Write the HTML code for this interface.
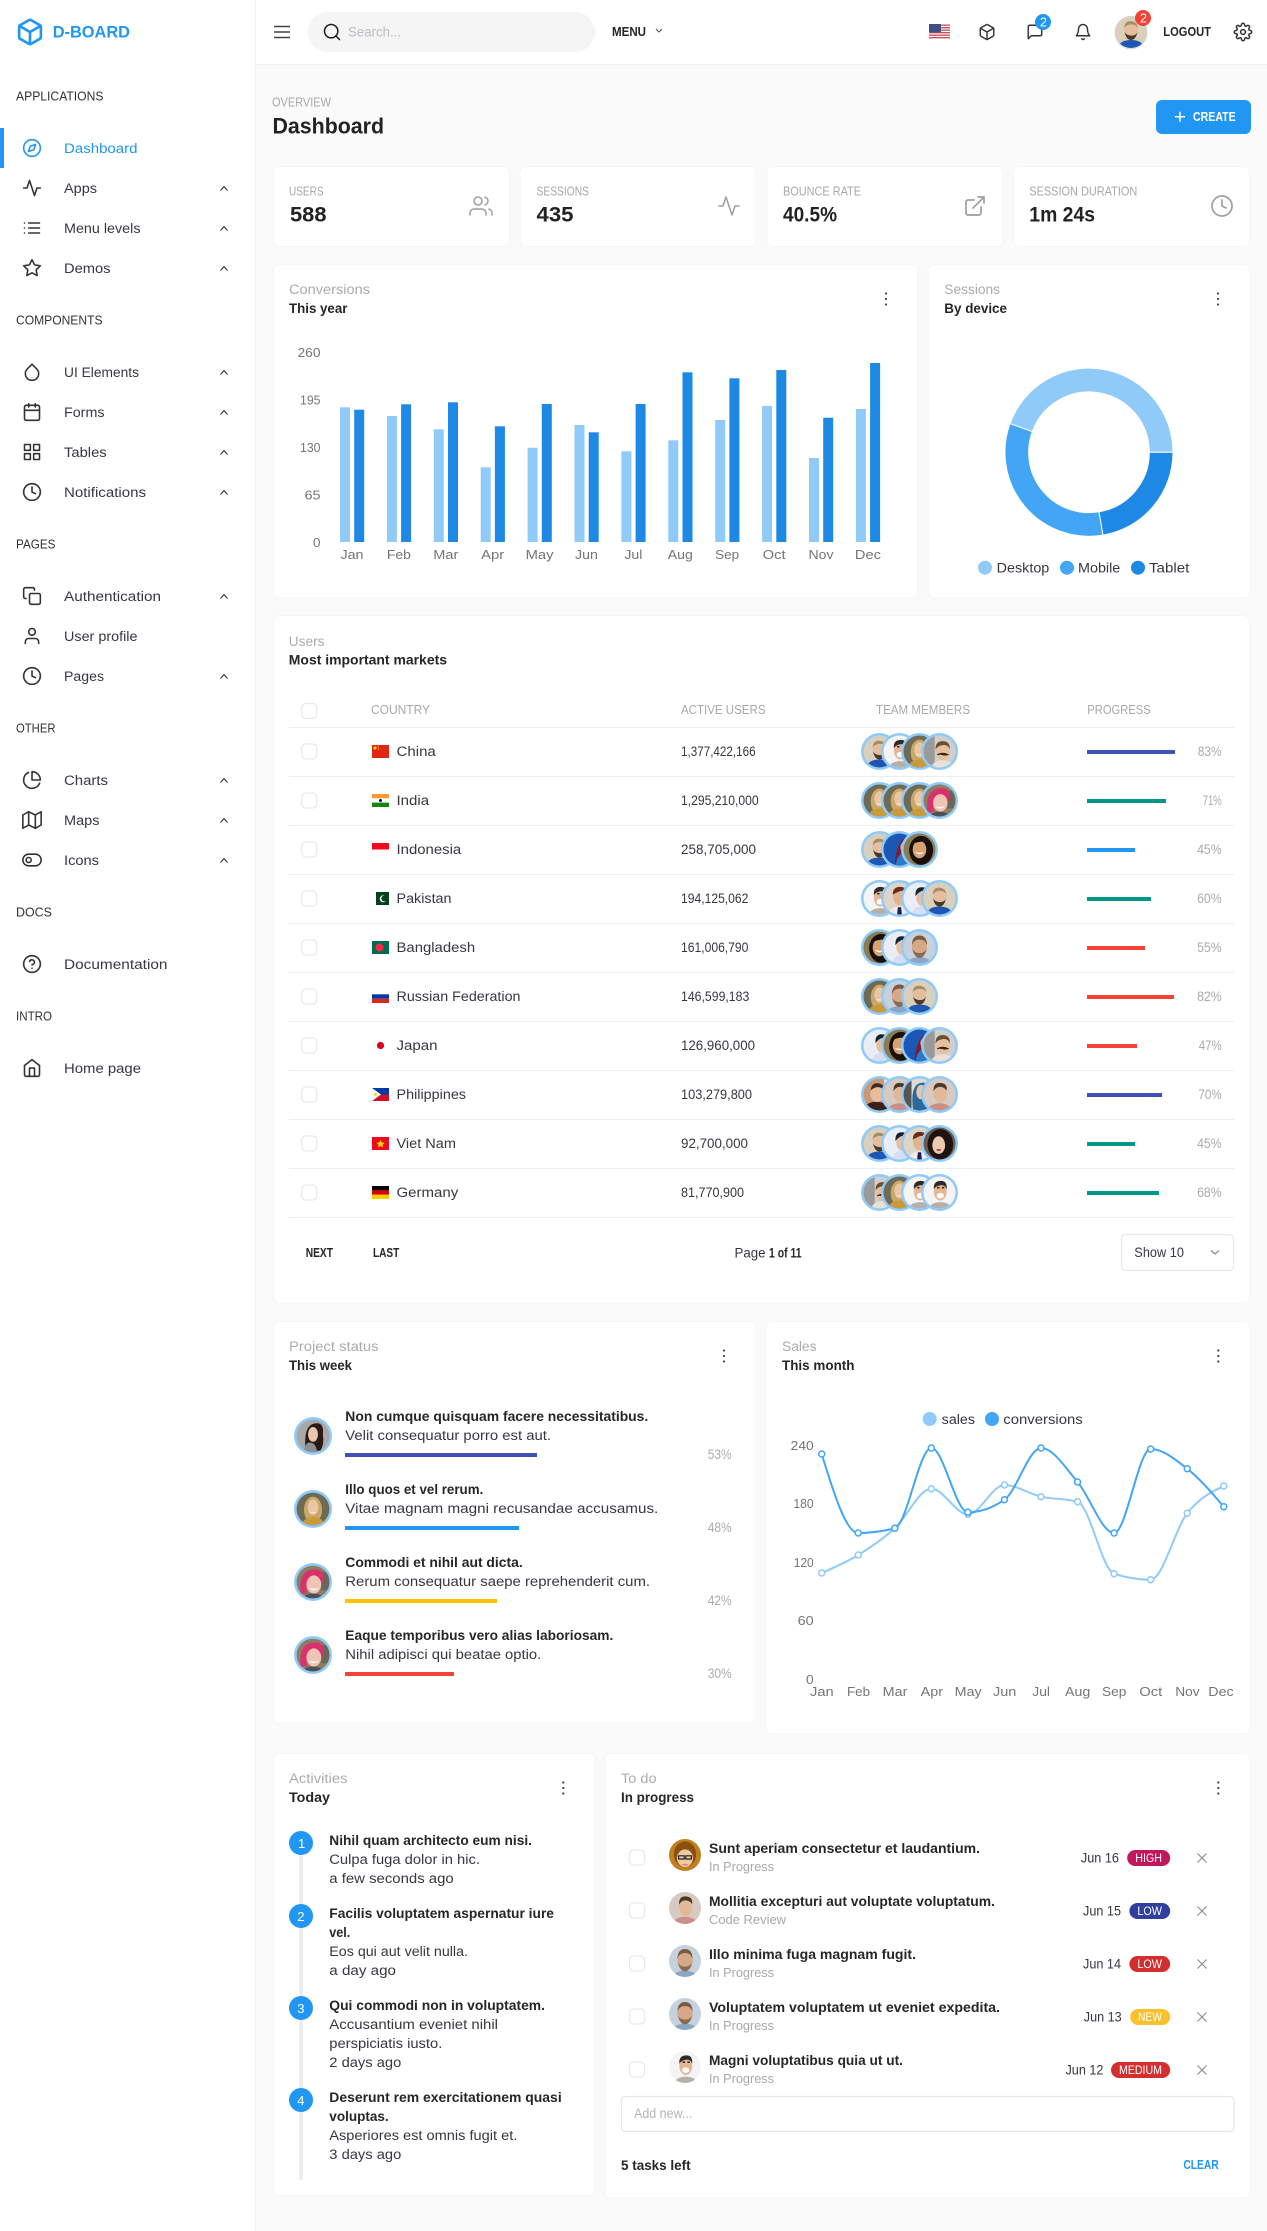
<!DOCTYPE html>
<html lang="en"><head><meta charset="utf-8"><title>D-Board Dashboard</title>
<style>
html,body{margin:0;padding:0;background:#fafafa}
svg{display:block}
text{font-family:"Liberation Sans",sans-serif;font-size:13.5px;fill:#333}
.n{fill:#37373f}
.l{font-size:12.5px;fill:#333}
.g{fill:#ababab}
.b{font-weight:bold;fill:#262626}
.u{font-size:12.5px;fill:#a8a8a8}
.v{font-size:21px;font-weight:bold;fill:#222}
.x{font-size:13px;fill:#757575}
.w{font-size:11.5px;fill:#fff}
.i{fill:none;stroke-width:1.9;stroke-linecap:round;stroke-linejoin:round}
.c{fill:#fff;stroke:#f5f5f5}
.k{fill:#fff;stroke:#e6e9f0;stroke-width:1.2}
</style></head>
<body>
<svg xmlns="http://www.w3.org/2000/svg" width="1267" height="2231" viewBox="0 0 1267 2231">
<defs>
<clipPath id="cc"><circle cx="20" cy="20" r="20"/></clipPath>
<symbol id="a" viewBox="0 0 40 40"><g clip-path="url(#cc)"><rect width="40" height="40" fill="#d9cfbd"/><ellipse cx="20" cy="39" rx="16" ry="9" fill="#1f55b3"/><ellipse cx="20" cy="18" rx="8.500" ry="10.500" fill="#e5bd9f"/><path d="M11.500 15Q12 6 20 6.500T28.500 15Q26 10 20 10.500T11.500 15Z" fill="#a98d62"/><path d="M12 20Q14 30 20 30T28 20Q26 25 20 24.500T12 20Z" fill="#4d3826"/></g></symbol>
<symbol id="b" viewBox="0 0 40 40"><g clip-path="url(#cc)"><rect width="40" height="40" fill="#f4f4f4"/><ellipse cx="21" cy="40" rx="14" ry="8" fill="#b5b0a8"/><ellipse cx="21" cy="19" rx="8" ry="11" fill="#e4b596"/><path d="M13 16Q12 6 21 5.500T29 16Q27 10 21 11T13 16Z" fill="#2e2a28"/><ellipse cx="21" cy="24" rx="4.500" ry="3.500" fill="#fff"/><path d="M17 13h3v2h-3zM23 13h3v2h-3z" fill="#3a2a22"/></g></symbol>
<symbol id="c" viewBox="0 0 40 40"><g clip-path="url(#cc)"><rect width="40" height="40" fill="#6d6a55"/><ellipse cx="20" cy="21" rx="11" ry="16" fill="#c9a866"/><ellipse cx="20" cy="38" rx="13" ry="8" fill="#c99a3c"/><ellipse cx="20" cy="18" rx="6.500" ry="9.500" fill="#eac5a6"/><path d="M15 23Q20 27 25 23Q20 25 15 23Z" fill="#fff"/></g></symbol>
<symbol id="d" viewBox="0 0 40 40"><g clip-path="url(#cc)"><rect width="40" height="40" fill="#cfcfcf"/><rect width="14" height="40" fill="#9a9a9a"/><ellipse cx="24" cy="40" rx="14" ry="9" fill="#e8e2d6"/><ellipse cx="24" cy="20" rx="9" ry="11" fill="#e6c09e"/><path d="M15 17Q15 7 24 7T33 17Q30 11 24 12T15 17Z" fill="#6b5030"/><path d="M17 24Q24 20 31 24Q27 25 24 24T17 24Z" fill="#33251a" stroke="#33251a"/></g></symbol>
<symbol id="e" viewBox="0 0 40 40"><g clip-path="url(#cc)"><rect width="40" height="40" fill="#8d7d62"/><rect x="30" y="8" width="10" height="22" fill="#6a6658"/><path d="M5 34Q2 8 19 5T32 22Q28 14 20 14T12 24T13 34Z" fill="#d9306e"/><ellipse cx="21" cy="23" rx="9" ry="11" fill="#efc4b4"/><path d="M15 27Q21 33 27 27Q21 29 15 27Z" fill="#fff"/><ellipse cx="20" cy="39" rx="11" ry="5" fill="#4a5058"/></g></symbol>
<symbol id="f" viewBox="0 0 40 40"><g clip-path="url(#cc)"><rect width="40" height="40" fill="#1b57b5"/><path d="M14 40Q15 20 22 10T31 14Q24 16 25 40Z" fill="#7a1c32"/><path d="M15 40Q17 27 24 24Q30 30 30 40Z" fill="#2a7ac8"/><ellipse cx="25" cy="17" rx="4" ry="6" fill="#d8a488"/></g></symbol>
<symbol id="g" viewBox="0 0 40 40"><g clip-path="url(#cc)"><rect width="40" height="40" fill="#8a7d55"/><ellipse cx="22" cy="21" rx="15" ry="18" fill="#1a100b"/><ellipse cx="20" cy="20" rx="8.500" ry="11" fill="#d9a274"/><path d="M14 23Q20 29 26 23Q20 25 14 23Z" fill="#fff"/><path d="M11 13Q16 6 27 10Q18 10 11 13Z" fill="#1a100b"/></g></symbol>
<symbol id="h" viewBox="0 0 40 40"><g clip-path="url(#cc)"><rect width="40" height="40" fill="#dcd5c8"/><ellipse cx="20" cy="40" rx="14" ry="10" fill="#ececec"/><path d="M18 31h4l1 9h-6z" fill="#231f55"/><ellipse cx="20" cy="18" rx="8" ry="10.500" fill="#e2b391"/><path d="M11.500 15Q12 5 21 5.500T28.500 14Q24 9 20 11T11.500 15Z" fill="#6a2c1c"/></g></symbol>
<symbol id="i" viewBox="0 0 40 40"><g clip-path="url(#cc)"><rect width="40" height="40" fill="#e9eef6"/><ellipse cx="23" cy="40" rx="12" ry="11" fill="#d5def2"/><ellipse cx="23" cy="19" rx="7" ry="10" fill="#e6bfa0"/><path d="M15 17Q14 6 23 6T31 14Q26 9 22 11T15 17Z" fill="#17222e"/></g></symbol>
<symbol id="j" viewBox="0 0 40 40"><g clip-path="url(#cc)"><rect width="40" height="40" fill="#c5d1dc"/><ellipse cx="20" cy="40" rx="15" ry="8" fill="#8aa6c4"/><ellipse cx="20" cy="19" rx="9.500" ry="13" fill="#d6a888"/><path d="M10.500 17Q11 5 20 5T29.500 17Q27 10 20 10T10.500 17Z" fill="#7a5a40"/><path d="M11 22Q14 33 20 33T29 22Q26 27 20 27T11 22Z" fill="#8a6a50"/></g></symbol>
<symbol id="k" viewBox="0 0 40 40"><g clip-path="url(#cc)"><rect width="40" height="40" fill="#c89878"/><rect x="26" width="14" height="40" fill="#eee"/><ellipse cx="16" cy="40" rx="16" ry="11" fill="#3a2018"/><ellipse cx="17" cy="19" rx="8.500" ry="10.500" fill="#e8bd9c"/><path d="M9 15Q10 5 18 6T26 14Q20 10 16 11T9 15Z" fill="#3a2a20"/></g></symbol>
<symbol id="l" viewBox="0 0 40 40"><g clip-path="url(#cc)"><rect width="40" height="40" fill="#d6cac2"/><ellipse cx="20" cy="40" rx="15" ry="9" fill="#c89088"/><ellipse cx="21" cy="19" rx="8" ry="11" fill="#e2b898"/><path d="M12.500 16Q12 5 21 5.500T29 15Q25 10 20 10.500T12.500 16Z" fill="#4a3a2a"/></g></symbol>
<symbol id="m" viewBox="0 0 40 40"><g clip-path="url(#cc)"><rect width="40" height="40" fill="#e0dcd4"/><rect width="10" height="40" fill="#555"/><path d="M12 40Q8 10 20 6T32 16L30 40Z" fill="#2a6a9a"/><ellipse cx="22" cy="17" rx="6" ry="9" fill="#e8c4a8"/></g></symbol>
<symbol id="n" viewBox="0 0 40 40"><g clip-path="url(#cc)"><rect width="40" height="40" fill="#6a5a50"/><ellipse cx="21" cy="21" rx="16" ry="19" fill="#1f1310"/><ellipse cx="19" cy="22" rx="8" ry="11" fill="#eccab0"/><ellipse cx="19" cy="28" rx="3" ry="1.200" fill="#b03050"/></g></symbol>
<symbol id="o" viewBox="0 0 40 40"><g clip-path="url(#cc)"><rect width="40" height="40" fill="#c08020"/><ellipse cx="20" cy="19" rx="14" ry="16" fill="#8a5010"/><ellipse cx="20" cy="24" rx="10" ry="11" fill="#eec8a0"/><path d="M12 21h7v4h-7zM21 21h7v4h-7z" fill="none" stroke="#222" stroke-width="1.500"/><path d="M15 31Q20 33 25 31Q20 35 15 31Z" fill="#b8504a"/></g></symbol>
<symbol id="p" viewBox="0 0 40 40"><g clip-path="url(#cc)"><rect width="40" height="40" fill="#a8a8a8"/><path d="M11 38Q8 8 21 5T32 18Q34 30 29 38Z" fill="#2b1a14"/><ellipse cx="20" cy="18" rx="6" ry="9" fill="#e9c6ac"/><path d="M9 40Q10 27 17 28T25 40Z" fill="#8a8f96"/></g></symbol>
<symbol id="Ra" viewBox="0 0 37 37"><circle cx="18.500" cy="18.500" r="18.500" fill="#90caf9"/><use href="#a" x="2.500" y="2.500" width="32" height="32"/></symbol>
<symbol id="Rb" viewBox="0 0 37 37"><circle cx="18.500" cy="18.500" r="18.500" fill="#90caf9"/><use href="#b" x="2.500" y="2.500" width="32" height="32"/></symbol>
<symbol id="Rc" viewBox="0 0 37 37"><circle cx="18.500" cy="18.500" r="18.500" fill="#90caf9"/><use href="#c" x="2.500" y="2.500" width="32" height="32"/></symbol>
<symbol id="Rd" viewBox="0 0 37 37"><circle cx="18.500" cy="18.500" r="18.500" fill="#90caf9"/><use href="#d" x="2.500" y="2.500" width="32" height="32"/></symbol>
<symbol id="Re" viewBox="0 0 37 37"><circle cx="18.500" cy="18.500" r="18.500" fill="#90caf9"/><use href="#e" x="2.500" y="2.500" width="32" height="32"/></symbol>
<symbol id="Rf" viewBox="0 0 37 37"><circle cx="18.500" cy="18.500" r="18.500" fill="#90caf9"/><use href="#f" x="2.500" y="2.500" width="32" height="32"/></symbol>
<symbol id="Rg" viewBox="0 0 37 37"><circle cx="18.500" cy="18.500" r="18.500" fill="#90caf9"/><use href="#g" x="2.500" y="2.500" width="32" height="32"/></symbol>
<symbol id="Rh" viewBox="0 0 37 37"><circle cx="18.500" cy="18.500" r="18.500" fill="#90caf9"/><use href="#h" x="2.500" y="2.500" width="32" height="32"/></symbol>
<symbol id="Ri" viewBox="0 0 37 37"><circle cx="18.500" cy="18.500" r="18.500" fill="#90caf9"/><use href="#i" x="2.500" y="2.500" width="32" height="32"/></symbol>
<symbol id="Rj" viewBox="0 0 37 37"><circle cx="18.500" cy="18.500" r="18.500" fill="#90caf9"/><use href="#j" x="2.500" y="2.500" width="32" height="32"/></symbol>
<symbol id="Rk" viewBox="0 0 37 37"><circle cx="18.500" cy="18.500" r="18.500" fill="#90caf9"/><use href="#k" x="2.500" y="2.500" width="32" height="32"/></symbol>
<symbol id="Rl" viewBox="0 0 37 37"><circle cx="18.500" cy="18.500" r="18.500" fill="#90caf9"/><use href="#l" x="2.500" y="2.500" width="32" height="32"/></symbol>
<symbol id="Rm" viewBox="0 0 37 37"><circle cx="18.500" cy="18.500" r="18.500" fill="#90caf9"/><use href="#m" x="2.500" y="2.500" width="32" height="32"/></symbol>
<symbol id="Rn" viewBox="0 0 37 37"><circle cx="18.500" cy="18.500" r="18.500" fill="#90caf9"/><use href="#n" x="2.500" y="2.500" width="32" height="32"/></symbol>
<symbol id="Rp" viewBox="0 0 37 37"><circle cx="18.500" cy="18.500" r="18.500" fill="#90caf9"/><use href="#p" x="2.500" y="2.500" width="32" height="32"/></symbol>

<symbol id="compass" viewBox="0 0 24 24"><circle cx="12" cy="12" r="10"/><polygon points="16.240 7.760 14.120 14.120 7.760 16.240 9.880 9.880"/></symbol>
<symbol id="activity" viewBox="0 0 24 24"><polyline points="22 12 18 12 15 21 9 3 6 12 2 12"/></symbol>
<symbol id="list" viewBox="0 0 24 24"><path d="M8 6h13M8 12h13M8 18h13M3 6h.01M3 12h.01M3 18h.01"/></symbol>
<symbol id="star" viewBox="0 0 24 24"><polygon points="12 2 15.090 8.260 22 9.270 17 14.140 18.180 21.020 12 17.770 5.820 21.020 7 14.140 2 9.270 8.910 8.260"/></symbol>
<symbol id="droplet" viewBox="0 0 24 24"><path d="M12 2.690l5.660 5.660a8 8 0 1 1-11.310 0z"/></symbol>
<symbol id="calendar" viewBox="0 0 24 24"><rect x="3" y="4" width="18" height="18" rx="2"/><path d="M16 2v4M8 2v4M3 10h18"/></symbol>
<symbol id="grid" viewBox="0 0 24 24"><rect x="3" y="3" width="7" height="7"/><rect x="14" y="3" width="7" height="7"/><rect x="14" y="14" width="7" height="7"/><rect x="3" y="14" width="7" height="7"/></symbol>
<symbol id="clock" viewBox="0 0 24 24"><circle cx="12" cy="12" r="10"/><polyline points="12 6 12 12 16 14"/></symbol>
<symbol id="copy" viewBox="0 0 24 24"><rect x="9" y="9" width="13" height="13" rx="2"/><path d="M5 15H4a2 2 0 0 1-2-2V4a2 2 0 0 1 2-2h9a2 2 0 0 1 2 2v1"/></symbol>
<symbol id="user" viewBox="0 0 24 24"><path d="M20 21v-2a4 4 0 0 0-4-4H8a4 4 0 0 0-4 4v2"/><circle cx="12" cy="7" r="4"/></symbol>
<symbol id="pie" viewBox="0 0 24 24"><path d="M21.210 15.890A10 10 0 1 1 8 2.830"/><path d="M22 12A10 10 0 0 0 12 2v10z"/></symbol>
<symbol id="map" viewBox="0 0 24 24"><polygon points="1 6 1 22 8 18 16 22 23 18 23 2 16 6 8 2 1 6"/><path d="M8 2v16M16 6v16"/></symbol>
<symbol id="toggle" viewBox="0 0 24 24"><rect x="1" y="5" width="22" height="14" rx="7"/><circle cx="8" cy="12" r="3"/></symbol>
<symbol id="help" viewBox="0 0 24 24"><circle cx="12" cy="12" r="10"/><path d="M9.090 9a3 3 0 0 1 5.830 1c0 2-3 3-3 3M12 17h.01"/></symbol>
<symbol id="home" viewBox="0 0 24 24"><path d="M3 9l9-7 9 7v11a2 2 0 0 1-2 2H5a2 2 0 0 1-2-2z"/><polyline points="9 22 9 12 15 12 15 22"/></symbol>
<symbol id="box" viewBox="0 0 24 24"><path d="M21 16V8a2 2 0 0 0-1-1.730l-7-4a2 2 0 0 0-2 0l-7 4A2 2 0 0 0 3 8v8a2 2 0 0 0 1 1.730l7 4a2 2 0 0 0 2 0l7-4A2 2 0 0 0 21 16z"/><polyline points="3.270 6.960 12 12.010 20.730 6.960"/><path d="M12 22.080V12"/></symbol>
<symbol id="msg" viewBox="0 0 24 24"><path d="M21 15a2 2 0 0 1-2 2H7l-4 4V5a2 2 0 0 1 2-2h14a2 2 0 0 1 2 2z"/></symbol>
<symbol id="bell" viewBox="0 0 24 24"><path d="M18 8A6 6 0 0 0 6 8c0 7-3 9-3 9h18s-3-2-3-9"/><path d="M13.730 21a2 2 0 0 1-3.460 0"/></symbol>
<symbol id="gear" viewBox="0 0 24 24"><circle cx="12" cy="12" r="3"/><path d="M19.400 15a1.650 1.650 0 0 0 .33 1.820l.06.06a2 2 0 0 1 0 2.830 2 2 0 0 1-2.830 0l-.06-.06a1.650 1.650 0 0 0-1.820-.33 1.650 1.650 0 0 0-1 1.510V21a2 2 0 0 1-2 2 2 2 0 0 1-2-2v-.09A1.650 1.650 0 0 0 9 19.400a1.650 1.650 0 0 0-1.820.33l-.06.06a2 2 0 0 1-2.830 0 2 2 0 0 1 0-2.830l.06-.06a1.650 1.650 0 0 0 .33-1.820 1.650 1.650 0 0 0-1.510-1H3a2 2 0 0 1-2-2 2 2 0 0 1 2-2h.09A1.650 1.650 0 0 0 4.600 9a1.650 1.650 0 0 0-.33-1.820l-.06-.06a2 2 0 0 1 0-2.830 2 2 0 0 1 2.830 0l.06.06a1.650 1.650 0 0 0 1.820.33H9a1.650 1.650 0 0 0 1-1.510V3a2 2 0 0 1 2-2 2 2 0 0 1 2 2v.09a1.650 1.650 0 0 0 1 1.510 1.650 1.650 0 0 0 1.820-.33l.06-.06a2 2 0 0 1 2.830 0 2 2 0 0 1 0 2.830l-.06.06a1.650 1.650 0 0 0-.33 1.820V9a1.650 1.650 0 0 0 1.510 1H21a2 2 0 0 1 2 2 2 2 0 0 1-2 2h-.09a1.650 1.650 0 0 0-1.510 1z"/></symbol>
<symbol id="users" viewBox="0 0 24 24"><path d="M17 21v-2a4 4 0 0 0-4-4H5a4 4 0 0 0-4 4v2"/><circle cx="9" cy="7" r="4"/><path d="M23 21v-2a4 4 0 0 0-3-3.870M16 3.130a4 4 0 0 1 0 7.750"/></symbol>
<symbol id="ext" viewBox="0 0 24 24"><path d="M18 13v6a2 2 0 0 1-2 2H5a2 2 0 0 1-2-2V8a2 2 0 0 1 2-2h6"/><polyline points="15 3 21 3 21 9"/><path d="M10 14L21 3"/></symbol>
<symbol id="search" viewBox="0 0 24 24"><circle cx="11" cy="11" r="8"/><path d="M21 21l-4.350-4.350"/></symbol>
<path id="ch" d="M220.500 2.500L224-1.500L227.500 2.500" fill="none" stroke="#333" stroke-width="1.100"/>
<g id="kb" fill="#444"><circle cy="-5.500" r="1.100"/><circle r="1.100"/><circle cy="5.500" r="1.100"/></g>
<path id="xx" d="M-4.500-4.500L4.500 4.500M4.500-4.500L-4.500 4.500" stroke="#8a8a8a" stroke-width="1.100" fill="none"/>
</defs>

<rect width="1267" height="2231" fill="#fafafa"/>

<!-- header -->
<rect x="255" width="1012" height="64" fill="#fff"/>
<rect x="255" y="64" width="1012" height="1" fill="#f0f0f0"/>
<path d="M274 26.500h16M274 32h16M274 37.500h16" stroke="#444" stroke-width="1.400"/>
<rect x="308" y="12" width="287" height="40" rx="20" fill="#f5f5f5"/>
<use href="#search" class="i" x="322" y="22" width="20" height="20" stroke="#222"/>
<text x="348" y="36.500" style="fill:#b9bdc4" textLength="53" lengthAdjust="spacingAndGlyphs">Search...</text>
<text x="612" y="36" class="b" style="font-size:12.500px" textLength="34" lengthAdjust="spacingAndGlyphs">MENU</text>
<path d="M656 29l3 3 3-3" fill="none" stroke="#555" stroke-width="1.100"/>
<g>
<rect x="929" y="24" width="21" height="16" fill="#fff"/>
<path d="M929 25.200h21M929 27.700h21M929 30.200h21M929 32.700h21M929 35.200h21M929 37.700h21" stroke="#c9505c" stroke-width="1.300"/>
<rect x="929" y="24" width="12" height="8.500" fill="#3f4f80"/>
</g>
<use href="#box" class="i" x="978" y="23" width="18" height="18" stroke="#333"/>
<use href="#msg" class="i" x="1026" y="23" width="18" height="18" stroke="#333"/>
<circle cx="1043" cy="22" r="8" fill="#2196f3"/><text x="1040" y="26.500" class="w" style="font-size:12.500px">2</text>
<use href="#bell" class="i" x="1074" y="23" width="18" height="18" stroke="#333"/>
<circle cx="1131" cy="33" r="16.500" fill="#ddd"/>
<use href="#a" x="1115" y="16" width="32" height="32"/>
<circle cx="1143" cy="18" r="8" fill="#f44336"/><text x="1140" y="22.500" class="w" style="font-size:12.500px">2</text>
<text x="1163.300" y="36" class="b" style="font-size:12.500px" textLength="47.700" lengthAdjust="spacingAndGlyphs">LOGOUT</text>
<use href="#gear" class="i" x="1233.500" y="22.500" width="19" height="19" stroke="#333"/>

<!-- sidebar -->
<rect width="255" height="2231" fill="#fff"/>
<rect x="255" width="1" height="2231" fill="#f1f1f1"/>
<use href="#box" class="i" x="15.500" y="17.500" width="29" height="29" stroke="#2196f3" style="stroke-width:2.200"/>
<text x="52.700" y="37.500" style="font-size:17px;font-weight:bold;fill:#2196f3" textLength="77.300" lengthAdjust="spacingAndGlyphs">D-BOARD</text>
<rect y="128" width="4" height="40" fill="#2196f3"/>

<text x="16" y="100.500" class="l" textLength="87.500" lengthAdjust="spacingAndGlyphs">APPLICATIONS</text>
<text x="16" y="324.500" class="l" textLength="86.500" lengthAdjust="spacingAndGlyphs">COMPONENTS</text>
<text x="16" y="548.500" class="l" textLength="39.500" lengthAdjust="spacingAndGlyphs">PAGES</text>
<text x="16" y="732.500" class="l" textLength="39.500" lengthAdjust="spacingAndGlyphs">OTHER</text>
<text x="16" y="916.500" class="l" textLength="36" lengthAdjust="spacingAndGlyphs">DOCS</text>
<text x="16" y="1020.500" class="l" textLength="36" lengthAdjust="spacingAndGlyphs">INTRO</text>

<text x="64" y="153" style="fill:#2196f3" textLength="73.500" lengthAdjust="spacingAndGlyphs">Dashboard</text>
<text x="64" y="193" class="n" textLength="33" lengthAdjust="spacingAndGlyphs">Apps</text>
<text x="64" y="233" class="n" textLength="76.500" lengthAdjust="spacingAndGlyphs">Menu levels</text>
<text x="64" y="273" class="n" textLength="46.500" lengthAdjust="spacingAndGlyphs">Demos</text>
<text x="64" y="377" class="n" textLength="75" lengthAdjust="spacingAndGlyphs">UI Elements</text>
<text x="64" y="417" class="n" textLength="40.500" lengthAdjust="spacingAndGlyphs">Forms</text>
<text x="64" y="457" class="n" textLength="42.700" lengthAdjust="spacingAndGlyphs">Tables</text>
<text x="64" y="497" class="n" textLength="82" lengthAdjust="spacingAndGlyphs">Notifications</text>
<text x="64" y="601" class="n" textLength="97" lengthAdjust="spacingAndGlyphs">Authentication</text>
<text x="64" y="641" class="n" textLength="73.500" lengthAdjust="spacingAndGlyphs">User profile</text>
<text x="64" y="681" class="n" textLength="40" lengthAdjust="spacingAndGlyphs">Pages</text>
<text x="64" y="785" class="n" textLength="44" lengthAdjust="spacingAndGlyphs">Charts</text>
<text x="64" y="825" class="n" textLength="35.500" lengthAdjust="spacingAndGlyphs">Maps</text>
<text x="64" y="865" class="n" textLength="35" lengthAdjust="spacingAndGlyphs">Icons</text>
<text x="64" y="969" class="n" textLength="103.500" lengthAdjust="spacingAndGlyphs">Documentation</text>
<text x="64" y="1073" class="n" textLength="77" lengthAdjust="spacingAndGlyphs">Home page</text>

<use href="#compass" class="i" x="22" y="138" width="20" height="20" stroke="#2196f3"/>
<use href="#activity" class="i" x="22" y="178" width="20" height="20" stroke="#333"/>
<use href="#list" class="i" x="22" y="218" width="20" height="20" stroke="#333"/>
<use href="#star" class="i" x="22" y="258" width="20" height="20" stroke="#333"/>
<use href="#droplet" class="i" x="22" y="362" width="20" height="20" stroke="#333"/>
<use href="#calendar" class="i" x="22" y="402" width="20" height="20" stroke="#333"/>
<use href="#grid" class="i" x="22" y="442" width="20" height="20" stroke="#333"/>
<use href="#clock" class="i" x="22" y="482" width="20" height="20" stroke="#333"/>
<use href="#copy" class="i" x="22" y="586" width="20" height="20" stroke="#333"/>
<use href="#user" class="i" x="22" y="626" width="20" height="20" stroke="#333"/>
<use href="#clock" class="i" x="22" y="666" width="20" height="20" stroke="#333"/>
<use href="#pie" class="i" x="22" y="770" width="20" height="20" stroke="#333"/>
<use href="#map" class="i" x="22" y="810" width="20" height="20" stroke="#333"/>
<use href="#toggle" class="i" x="22" y="850" width="20" height="20" stroke="#333"/>
<use href="#help" class="i" x="22" y="954" width="20" height="20" stroke="#333"/>
<use href="#home" class="i" x="22" y="1058" width="20" height="20" stroke="#333"/>

<use href="#ch" y="188"/><use href="#ch" y="228"/><use href="#ch" y="268"/><use href="#ch" y="372"/><use href="#ch" y="412"/><use href="#ch" y="452"/><use href="#ch" y="492"/><use href="#ch" y="596"/><use href="#ch" y="676"/><use href="#ch" y="780"/><use href="#ch" y="820"/><use href="#ch" y="860"/>

<!-- title -->
<text x="272" y="106.500" class="u" textLength="59" lengthAdjust="spacingAndGlyphs">OVERVIEW</text>
<text x="272.500" y="133.300" style="font-size:22px;font-weight:bold;fill:#222" textLength="111.500" lengthAdjust="spacingAndGlyphs">Dashboard</text>
<rect x="1156" y="100" width="95" height="34" rx="6" fill="#2196f3"/>
<path d="M1175 116.700h10M1180 111.700v10" stroke="#fff" stroke-width="1.500"/>
<text x="1193" y="121" style="font-size:13px;font-weight:bold;fill:#fff" textLength="42.700" lengthAdjust="spacingAndGlyphs">CREATE</text>

<!-- stat cards -->
<rect x="273.500" y="166.500" width="236" height="80" rx="6" class="c"/>
<rect x="520" y="166.500" width="236" height="80" rx="6" class="c"/>
<rect x="767" y="166.500" width="236" height="80" rx="6" class="c"/>
<rect x="1013.500" y="166.500" width="236" height="80" rx="6" class="c"/>
<text x="289" y="195.300" class="u" textLength="34.500" lengthAdjust="spacingAndGlyphs">USERS</text>
<text x="536.500" y="195.300" class="u" textLength="52.500" lengthAdjust="spacingAndGlyphs">SESSIONS</text>
<text x="783" y="195.300" class="u" textLength="78" lengthAdjust="spacingAndGlyphs">BOUNCE RATE</text>
<text x="1029.300" y="195.300" class="u" textLength="108" lengthAdjust="spacingAndGlyphs">SESSION DURATION</text>
<text x="290" y="221.700" class="v" textLength="36.500" lengthAdjust="spacingAndGlyphs">588</text>
<text x="536.500" y="221.700" class="v" textLength="37" lengthAdjust="spacingAndGlyphs">435</text>
<text x="783" y="221.700" class="v" textLength="54" lengthAdjust="spacingAndGlyphs">40.5%</text>
<text x="1029.300" y="221.700" class="v" textLength="65.700" lengthAdjust="spacingAndGlyphs">1m 24s</text>
<use href="#users" class="i" x="469" y="194" width="24" height="24" stroke="#9e9e9e" style="stroke-width:1.500"/>
<use href="#activity" class="i" x="717" y="194" width="24" height="24" stroke="#9e9e9e" style="stroke-width:1.500"/>
<use href="#ext" class="i" x="963" y="194" width="24" height="24" stroke="#9e9e9e" style="stroke-width:1.700"/>
<use href="#clock" class="i" x="1210" y="194" width="24" height="24" stroke="#9e9e9e" style="stroke-width:1.700"/>

<!-- conversions -->
<rect x="273.500" y="264.500" width="644" height="333.500" rx="6" class="c"/>
<text x="289" y="294" class="g" textLength="81" lengthAdjust="spacingAndGlyphs">Conversions</text>
<text x="289" y="313" class="b" textLength="58.400" lengthAdjust="spacingAndGlyphs">This year</text>
<use href="#kb" x="886" y="299"/>
<text x="297.500" y="357" class="x" textLength="23" lengthAdjust="spacingAndGlyphs">260</text>
<text x="300" y="404.500" class="x" textLength="20.500" lengthAdjust="spacingAndGlyphs">195</text>
<text x="300" y="452" class="x" textLength="20.500" lengthAdjust="spacingAndGlyphs">130</text>
<text x="304.500" y="499.500" class="x" textLength="16" lengthAdjust="spacingAndGlyphs">65</text>
<text x="313" y="547" class="x" textLength="7.500" lengthAdjust="spacingAndGlyphs">0</text>
<text x="340.500" y="559" class="x" textLength="23" lengthAdjust="spacingAndGlyphs">Jan</text>
<text x="386.900" y="559" class="x" textLength="24" lengthAdjust="spacingAndGlyphs">Feb</text>
<text x="433.300" y="559" class="x" textLength="25" lengthAdjust="spacingAndGlyphs">Mar</text>
<text x="481.200" y="559" class="x" textLength="23" lengthAdjust="spacingAndGlyphs">Apr</text>
<text x="525.600" y="559" class="x" textLength="28" lengthAdjust="spacingAndGlyphs">May</text>
<text x="575" y="559" class="x" textLength="23" lengthAdjust="spacingAndGlyphs">Jun</text>
<text x="624.400" y="559" class="x" textLength="18" lengthAdjust="spacingAndGlyphs">Jul</text>
<text x="667.800" y="559" class="x" textLength="25" lengthAdjust="spacingAndGlyphs">Aug</text>
<text x="715.200" y="559" class="x" textLength="24" lengthAdjust="spacingAndGlyphs">Sep</text>
<text x="762.600" y="559" class="x" textLength="23" lengthAdjust="spacingAndGlyphs">Oct</text>
<text x="808.500" y="559" class="x" textLength="25" lengthAdjust="spacingAndGlyphs">Nov</text>
<text x="854.900" y="559" class="x" textLength="26" lengthAdjust="spacingAndGlyphs">Dec</text>
<g fill="#90caf9">
<rect x="340" y="407.300" width="10" height="134.700"/>
<rect x="386.900" y="416" width="10" height="126"/>
<rect x="433.800" y="429.300" width="10" height="112.700"/>
<rect x="480.700" y="467.300" width="10" height="74.700"/>
<rect x="527.600" y="447.700" width="10" height="94.300"/>
<rect x="574.500" y="425" width="10" height="117"/>
<rect x="621.400" y="451.300" width="10" height="90.700"/>
<rect x="668.300" y="440.300" width="10" height="101.700"/>
<rect x="715.200" y="420" width="10" height="122"/>
<rect x="762.100" y="406" width="10" height="136"/>
<rect x="809" y="458" width="10" height="84"/>
<rect x="855.900" y="409" width="10" height="133"/>
</g>
<g fill="#1e88e5">
<rect x="354.200" y="409.700" width="10" height="132.300"/>
<rect x="401.100" y="404.300" width="10" height="137.700"/>
<rect x="448" y="402.300" width="10" height="139.700"/>
<rect x="494.900" y="426.300" width="10" height="115.700"/>
<rect x="541.800" y="404" width="10" height="138"/>
<rect x="588.700" y="432.300" width="10" height="109.700"/>
<rect x="635.600" y="404" width="10" height="138"/>
<rect x="682.500" y="372.300" width="10" height="169.700"/>
<rect x="729.400" y="378.300" width="10" height="163.700"/>
<rect x="776.300" y="370" width="10" height="172"/>
<rect x="823.200" y="417.700" width="10" height="124.300"/>
<rect x="870.100" y="363" width="10" height="179"/>
</g>

<!-- sessions -->
<rect x="928" y="264.500" width="322" height="333.500" rx="6" class="c"/>
<text x="944.300" y="294" class="g" textLength="55.700" lengthAdjust="spacingAndGlyphs">Sessions</text>
<text x="944.300" y="313" class="b" textLength="62.700" lengthAdjust="spacingAndGlyphs">By device</text>
<use href="#kb" x="1218" y="299"/>
<g stroke="#fff" stroke-width="1">
<path d="M1173 452.300A84 84 0 0 0 1010 423.600L1032.300 431.700A60.300 60.300 0 0 1 1149.300 452.300Z" fill="#90caf9"/>
<path d="M1010 423.600A84 84 0 0 0 1103 535.100L1099.070 511.800A60.300 60.300 0 0 1 1032.300 431.700Z" fill="#42a5f5"/>
<path d="M1103 535.100A84 84 0 0 0 1173 452.300L1149.300 452.300A60.300 60.300 0 0 1 1099.070 511.800Z" fill="#1e88e5"/>
</g>
<circle cx="985" cy="567.700" r="7" fill="#90caf9"/><circle cx="1067" cy="567.700" r="7" fill="#42a5f5"/><circle cx="1138" cy="567.700" r="7" fill="#1e88e5"/>
<text x="996.700" y="572.500" class="n" textLength="52.600" lengthAdjust="spacingAndGlyphs">Desktop</text>
<text x="1078" y="572.500" class="n" textLength="42.300" lengthAdjust="spacingAndGlyphs">Mobile</text>
<text x="1149" y="572.500" class="n" textLength="40.300" lengthAdjust="spacingAndGlyphs">Tablet</text>

<!-- users table -->
<rect x="273.500" y="615.500" width="976" height="687.500" rx="6" class="c"/>
<text x="288.800" y="646" class="g" textLength="35.700" lengthAdjust="spacingAndGlyphs">Users</text>
<text x="288.800" y="664.700" class="b" textLength="158.200" lengthAdjust="spacingAndGlyphs">Most important markets</text>
<rect x="301.700" y="703.500" width="15" height="15" rx="4" class="k"/>
<text x="371" y="714.200" class="u" textLength="59" lengthAdjust="spacingAndGlyphs">COUNTRY</text>
<text x="681" y="714.200" class="u" textLength="84.500" lengthAdjust="spacingAndGlyphs">ACTIVE USERS</text>
<text x="876" y="714.200" class="u" textLength="94" lengthAdjust="spacingAndGlyphs">TEAM MEMBERS</text>
<text x="1087.300" y="714.200" class="u" textLength="63.400" lengthAdjust="spacingAndGlyphs">PROGRESS</text>
<path d="M289 727.500H1234M289 776.500H1234M289 825.500H1234M289 874.500H1234M289 923.500H1234M289 972.500H1234M289 1021.500H1234M289 1070.500H1234M289 1119.500H1234M289 1168.500H1234M289 1217.500H1234" stroke="#eeeeee" stroke-width="1"/>
<rect x="301.700" y="744" width="15" height="15" rx="4" class="k"/>
<rect x="301.700" y="793" width="15" height="15" rx="4" class="k"/>
<rect x="301.700" y="842" width="15" height="15" rx="4" class="k"/>
<rect x="301.700" y="891" width="15" height="15" rx="4" class="k"/>
<rect x="301.700" y="940" width="15" height="15" rx="4" class="k"/>
<rect x="301.700" y="989" width="15" height="15" rx="4" class="k"/>
<rect x="301.700" y="1038" width="15" height="15" rx="4" class="k"/>
<rect x="301.700" y="1087" width="15" height="15" rx="4" class="k"/>
<rect x="301.700" y="1136" width="15" height="15" rx="4" class="k"/>
<rect x="301.700" y="1185" width="15" height="15" rx="4" class="k"/>

<!-- flags -->
<rect x="372" y="745" width="17" height="13" fill="#de2910"/><circle cx="375" cy="748" r="1.500" fill="#ffde00"/><circle cx="378" cy="746.500" r=".6" fill="#ffde00"/><circle cx="378.500" cy="749" r=".6" fill="#ffde00"/>
<rect x="372" y="794" width="17" height="4.400" fill="#ff9933"/><rect x="372" y="798.400" width="17" height="4.200" fill="#fff"/><rect x="372" y="802.600" width="17" height="4.400" fill="#138808"/><circle cx="380.500" cy="800.500" r="1.500" fill="#000088"/>
<rect x="372" y="843" width="17" height="6.500" fill="#f0081e"/><rect x="372" y="849.500" width="17" height="6.500" fill="#fff"/>
<rect x="372" y="892" width="17" height="13" fill="#fff"/><rect x="376" y="892" width="13" height="13" fill="#01411c"/><path d="M384.500 895.500a3.500 3.500 0 1 0 1.500 5.500a3 3 0 1 1-1.500-5.500z" fill="#fff"/>
<rect x="372" y="941" width="17" height="13" fill="#006a4e"/><circle cx="379.500" cy="947.500" r="4" fill="#f42a41"/>
<rect x="372" y="990" width="17" height="4.300" fill="#fff"/><rect x="372" y="994.300" width="17" height="4.400" fill="#0039a6"/><rect x="372" y="998.700" width="17" height="4.300" fill="#d52b1e"/>
<rect x="372" y="1039" width="17" height="13" fill="#fff"/><circle cx="380.500" cy="1045.500" r="3.600" fill="#e0001e"/>
<rect x="372" y="1088" width="17" height="6.500" fill="#0038a8"/><rect x="372" y="1094.500" width="17" height="6.500" fill="#ce1126"/><path d="M372 1088L381 1094.500L372 1101Z" fill="#fff"/><circle cx="375.500" cy="1094.500" r="1.500" fill="#fcd116"/>
<rect x="372" y="1137" width="17" height="13" fill="#f00a1e"/><polygon points="380.500,1139.800 381.700,1142.500 384.600,1142.700 382.400,1144.700 383.100,1147.500 380.500,1146 377.900,1147.500 378.600,1144.700 376.400,1142.700 379.300,1142.500" fill="#ffde00"/>
<rect x="372" y="1186" width="17" height="4.400" fill="#000"/><rect x="372" y="1190.400" width="17" height="4.300" fill="#dd0000"/><rect x="372" y="1194.700" width="17" height="4.300" fill="#ffce00"/>

<text x="396.500" y="756" class="n" textLength="39.300" lengthAdjust="spacingAndGlyphs">China</text>
<text x="396.500" y="805" class="n" textLength="32.600" lengthAdjust="spacingAndGlyphs">India</text>
<text x="396.500" y="854" class="n" textLength="64.700" lengthAdjust="spacingAndGlyphs">Indonesia</text>
<text x="396.500" y="903" class="n" textLength="55" lengthAdjust="spacingAndGlyphs">Pakistan</text>
<text x="396.500" y="952" class="n" textLength="78.600" lengthAdjust="spacingAndGlyphs">Bangladesh</text>
<text x="396.500" y="1001" class="n" textLength="124" lengthAdjust="spacingAndGlyphs">Russian Federation</text>
<text x="396.500" y="1050" class="n" textLength="41" lengthAdjust="spacingAndGlyphs">Japan</text>
<text x="396.500" y="1099" class="n" textLength="69.500" lengthAdjust="spacingAndGlyphs">Philippines</text>
<text x="396.500" y="1148" class="n" textLength="59.500" lengthAdjust="spacingAndGlyphs">Viet Nam</text>
<text x="396.500" y="1197" class="n" textLength="61.800" lengthAdjust="spacingAndGlyphs">Germany</text>

<text x="681" y="756" class="n" textLength="74.600" lengthAdjust="spacingAndGlyphs">1,377,422,166</text>
<text x="681" y="805" class="n" textLength="77.700" lengthAdjust="spacingAndGlyphs">1,295,210,000</text>
<text x="681" y="854" class="n" textLength="75" lengthAdjust="spacingAndGlyphs">258,705,000</text>
<text x="681" y="903" class="n" textLength="67.400" lengthAdjust="spacingAndGlyphs">194,125,062</text>
<text x="681" y="952" class="n" textLength="67.400" lengthAdjust="spacingAndGlyphs">161,006,790</text>
<text x="681" y="1001" class="n" textLength="68.300" lengthAdjust="spacingAndGlyphs">146,599,183</text>
<text x="681" y="1050" class="n" textLength="74" lengthAdjust="spacingAndGlyphs">126,960,000</text>
<text x="681" y="1099" class="n" textLength="71" lengthAdjust="spacingAndGlyphs">103,279,800</text>
<text x="681" y="1148" class="n" textLength="67" lengthAdjust="spacingAndGlyphs">92,700,000</text>
<text x="681" y="1197" class="n" textLength="63" lengthAdjust="spacingAndGlyphs">81,770,900</text>

<!-- team avatars -->
<use href="#Ra" x="861" y="733" width="37" height="37"/><use href="#Rb" x="881" y="733" width="37" height="37"/><use href="#Rc" x="901" y="733" width="37" height="37"/><use href="#Rd" x="921" y="733" width="37" height="37"/>
<use href="#Rc" x="861" y="782" width="37" height="37"/><use href="#Rc" x="881" y="782" width="37" height="37"/><use href="#Rc" x="901" y="782" width="37" height="37"/><use href="#Re" x="921" y="782" width="37" height="37"/>
<use href="#Ra" x="861" y="831" width="37" height="37"/><use href="#Rf" x="881" y="831" width="37" height="37"/><use href="#Rg" x="901" y="831" width="37" height="37"/>
<use href="#Rb" x="861" y="880" width="37" height="37"/><use href="#Rh" x="881" y="880" width="37" height="37"/><use href="#Ri" x="901" y="880" width="37" height="37"/><use href="#Ra" x="921" y="880" width="37" height="37"/>
<use href="#Rg" x="861" y="929" width="37" height="37"/><use href="#Ri" x="881" y="929" width="37" height="37"/><use href="#Rj" x="901" y="929" width="37" height="37"/>
<use href="#Rc" x="861" y="978" width="37" height="37"/><use href="#Rj" x="881" y="978" width="37" height="37"/><use href="#Ra" x="901" y="978" width="37" height="37"/>
<use href="#Ri" x="861" y="1027" width="37" height="37"/><use href="#Rg" x="881" y="1027" width="37" height="37"/><use href="#Rf" x="901" y="1027" width="37" height="37"/><use href="#Rd" x="921" y="1027" width="37" height="37"/>
<use href="#Rk" x="861" y="1076" width="37" height="37"/><use href="#Rl" x="881" y="1076" width="37" height="37"/><use href="#Rm" x="901" y="1076" width="37" height="37"/><use href="#Rl" x="921" y="1076" width="37" height="37"/>
<use href="#Ra" x="861" y="1125" width="37" height="37"/><use href="#Ri" x="881" y="1125" width="37" height="37"/><use href="#Rh" x="901" y="1125" width="37" height="37"/><use href="#Rn" x="921" y="1125" width="37" height="37"/>
<use href="#Rd" x="861" y="1174" width="37" height="37"/><use href="#Rc" x="881" y="1174" width="37" height="37"/><use href="#Rb" x="901" y="1174" width="37" height="37"/><use href="#Rb" x="921" y="1174" width="37" height="37"/>

<!-- progress -->
<rect x="1087" y="750" width="88" height="4" fill="#3f51b5"/>
<rect x="1087" y="799" width="79" height="4" fill="#009688"/>
<rect x="1087" y="848" width="48" height="4" fill="#2196f3"/>
<rect x="1087" y="897" width="64" height="4" fill="#009688"/>
<rect x="1087" y="946" width="58" height="4" fill="#f44336"/>
<rect x="1087" y="995" width="87" height="4" fill="#f44336"/>
<rect x="1087" y="1044" width="50" height="4" fill="#f44336"/>
<rect x="1087" y="1093" width="75" height="4" fill="#3f51b5"/>
<rect x="1087" y="1142" width="48" height="4" fill="#009688"/>
<rect x="1087" y="1191" width="72" height="4" fill="#009688"/>
<text x="1197.700" y="756" class="g" textLength="24" lengthAdjust="spacingAndGlyphs">83%</text>
<text x="1202.700" y="805" class="g" textLength="19" lengthAdjust="spacingAndGlyphs">71%</text>
<text x="1197.100" y="854" class="g" textLength="24.600" lengthAdjust="spacingAndGlyphs">45%</text>
<text x="1197.100" y="903" class="g" textLength="24.600" lengthAdjust="spacingAndGlyphs">60%</text>
<text x="1197.100" y="952" class="g" textLength="24.600" lengthAdjust="spacingAndGlyphs">55%</text>
<text x="1197.100" y="1001" class="g" textLength="24.600" lengthAdjust="spacingAndGlyphs">82%</text>
<text x="1198.700" y="1050" class="g" textLength="23" lengthAdjust="spacingAndGlyphs">47%</text>
<text x="1198.400" y="1099" class="g" textLength="23.300" lengthAdjust="spacingAndGlyphs">70%</text>
<text x="1197.100" y="1148" class="g" textLength="24.600" lengthAdjust="spacingAndGlyphs">45%</text>
<text x="1197.100" y="1197" class="g" textLength="24.600" lengthAdjust="spacingAndGlyphs">68%</text>

<text x="305.700" y="1257" class="b" style="font-size:12.500px" textLength="27.300" lengthAdjust="spacingAndGlyphs">NEXT</text>
<text x="373" y="1257" class="b" style="font-size:12.500px" textLength="26.300" lengthAdjust="spacingAndGlyphs">LAST</text>
<text x="734.500" y="1257.500" class="n" textLength="31" lengthAdjust="spacingAndGlyphs">Page</text>
<text x="769" y="1257.500" class="b" textLength="32.500" lengthAdjust="spacingAndGlyphs">1 of 11</text>
<rect x="1121.500" y="1234.500" width="112" height="36" rx="4" fill="#fff" stroke="#e6e9f0" stroke-width="1.200"/>
<text x="1134.300" y="1257" class="n" textLength="49.700" lengthAdjust="spacingAndGlyphs">Show 10</text>
<path d="M1211 1250.500l4 3.500 4-3.500" fill="none" stroke="#888" stroke-width="1.200"/>

<!-- project status -->
<rect x="273.500" y="1321.500" width="482.500" height="401.500" rx="6" class="c"/>
<text x="289" y="1351" class="g" textLength="89.500" lengthAdjust="spacingAndGlyphs">Project status</text>
<text x="289" y="1370" class="b" textLength="63" lengthAdjust="spacingAndGlyphs">This week</text>
<use href="#kb" x="724" y="1356"/>
<use href="#Rp" x="294" y="1417" width="38" height="38"/>
<use href="#Rc" x="294" y="1490" width="38" height="38"/>
<use href="#Re" x="294" y="1563" width="38" height="38"/>
<use href="#Re" x="294" y="1636" width="38" height="38"/>
<text x="345.300" y="1421" class="b" textLength="303" lengthAdjust="spacingAndGlyphs">Non cumque quisquam facere necessitatibus.</text>
<text x="345.300" y="1440.200" class="n" textLength="205.700" lengthAdjust="spacingAndGlyphs">Velit consequatur porro est aut.</text>
<rect x="345" y="1453" width="192" height="4" fill="#3f51b5"/>
<text x="707.700" y="1459" class="g" textLength="24" lengthAdjust="spacingAndGlyphs">53%</text>
<text x="345.300" y="1494" class="b" textLength="138" lengthAdjust="spacingAndGlyphs">Illo quos et vel rerum.</text>
<text x="345.300" y="1513.200" class="n" textLength="313" lengthAdjust="spacingAndGlyphs">Vitae magnam magni recusandae accusamus.</text>
<rect x="345" y="1526" width="174" height="4" fill="#2196f3"/>
<text x="707.700" y="1532" class="g" textLength="24" lengthAdjust="spacingAndGlyphs">48%</text>
<text x="345.300" y="1567" class="b" textLength="177.400" lengthAdjust="spacingAndGlyphs">Commodi et nihil aut dicta.</text>
<text x="345.300" y="1586.200" class="n" textLength="304.700" lengthAdjust="spacingAndGlyphs">Rerum consequatur saepe reprehenderit cum.</text>
<rect x="345" y="1599" width="152" height="4" fill="#ffc107"/>
<text x="707.700" y="1605" class="g" textLength="24" lengthAdjust="spacingAndGlyphs">42%</text>
<text x="345.300" y="1640" class="b" textLength="268" lengthAdjust="spacingAndGlyphs">Eaque temporibus vero alias laboriosam.</text>
<text x="345.300" y="1659.200" class="n" textLength="196" lengthAdjust="spacingAndGlyphs">Nihil adipisci qui beatae optio.</text>
<rect x="345" y="1672" width="109" height="4" fill="#f44336"/>
<text x="707.700" y="1678" class="g" textLength="24" lengthAdjust="spacingAndGlyphs">30%</text>

<!-- sales -->
<rect x="766" y="1321.500" width="484" height="412.500" rx="6" class="c"/>
<text x="782" y="1351" class="g" textLength="34.500" lengthAdjust="spacingAndGlyphs">Sales</text>
<text x="782" y="1370" class="b" textLength="72.500" lengthAdjust="spacingAndGlyphs">This month</text>
<use href="#kb" x="1218.300" y="1356"/>
<circle cx="929.700" cy="1419" r="7" fill="#90caf9"/><circle cx="992" cy="1419" r="7" fill="#42a5f5"/>
<text x="941.700" y="1424" class="n" textLength="33.300" lengthAdjust="spacingAndGlyphs">sales</text>
<text x="1003.300" y="1424" class="n" textLength="79.400" lengthAdjust="spacingAndGlyphs">conversions</text>
<text x="790.700" y="1450" class="x" textLength="23" lengthAdjust="spacingAndGlyphs">240</text>
<text x="793.400" y="1508" class="x" textLength="20.300" lengthAdjust="spacingAndGlyphs">180</text>
<text x="793.700" y="1567" class="x" textLength="20" lengthAdjust="spacingAndGlyphs">120</text>
<text x="797.700" y="1625" class="x" textLength="16" lengthAdjust="spacingAndGlyphs">60</text>
<text x="806" y="1684" class="x" textLength="7.700" lengthAdjust="spacingAndGlyphs">0</text>
<text x="810" y="1696" class="x" textLength="23.700" lengthAdjust="spacingAndGlyphs">Jan</text>
<text x="847" y="1696" class="x" textLength="23" lengthAdjust="spacingAndGlyphs">Feb</text>
<text x="882.700" y="1696" class="x" textLength="24.700" lengthAdjust="spacingAndGlyphs">Mar</text>
<text x="920.700" y="1696" class="x" textLength="22.300" lengthAdjust="spacingAndGlyphs">Apr</text>
<text x="954.700" y="1696" class="x" textLength="27" lengthAdjust="spacingAndGlyphs">May</text>
<text x="993" y="1696" class="x" textLength="23.300" lengthAdjust="spacingAndGlyphs">Jun</text>
<text x="1032.300" y="1696" class="x" textLength="17.700" lengthAdjust="spacingAndGlyphs">Jul</text>
<text x="1065" y="1696" class="x" textLength="25.300" lengthAdjust="spacingAndGlyphs">Aug</text>
<text x="1102" y="1696" class="x" textLength="24.300" lengthAdjust="spacingAndGlyphs">Sep</text>
<text x="1139.300" y="1696" class="x" textLength="23" lengthAdjust="spacingAndGlyphs">Oct</text>
<text x="1175.300" y="1696" class="x" textLength="24.300" lengthAdjust="spacingAndGlyphs">Nov</text>
<text x="1208.300" y="1696" class="x" textLength="25.300" lengthAdjust="spacingAndGlyphs">Dec</text>
<path fill="none" stroke="#90caf9" stroke-width="2" d="M821.700 1573C833.900 1567.700 846.100 1562.450 858.250 1555C870.400 1547.550 882.600 1539.350 894.800 1528.300C907 1517.250 919.200 1488.700 931.350 1488.700C943.500 1488.700 955.700 1514.300 967.900 1514.300C980.100 1514.300 992.300 1485 1004.450 1485C1016.600 1485 1028.800 1493.900 1041 1496.700C1053.200 1499.500 1065.400 1498.400 1077.550 1501.700C1089.700 1505 1101.900 1569.700 1114.100 1573.700C1126.300 1577.700 1138.500 1579.700 1150.650 1579.700C1162.800 1579.700 1175 1528.900 1187.200 1513.300C1199.400 1497.700 1211.600 1491.850 1223.750 1486"/>
<g fill="#fff" stroke="#90caf9" stroke-width="1.500">
<circle cx="821.700" cy="1573" r="3"/><circle cx="858.250" cy="1555" r="3"/><circle cx="894.800" cy="1528.300" r="3"/><circle cx="931.350" cy="1488.700" r="3"/><circle cx="967.900" cy="1514.300" r="3"/><circle cx="1004.450" cy="1485" r="3"/><circle cx="1041" cy="1496.700" r="3"/><circle cx="1077.550" cy="1501.700" r="3"/><circle cx="1114.100" cy="1573.700" r="3"/><circle cx="1150.650" cy="1579.700" r="3"/><circle cx="1187.200" cy="1513.300" r="3"/><circle cx="1223.750" cy="1486" r="3"/>
</g>
<path fill="none" stroke="#42a5f5" stroke-width="2" d="M821.700 1454C833.900 1493.500 846.100 1533 858.250 1533C870.400 1533 882.600 1531.400 894.800 1528.300C907 1525.200 919.200 1448 931.350 1448C943.500 1448 955.700 1512.300 967.900 1512.300C980.100 1512.300 992.300 1508.100 1004.450 1499.700C1016.600 1491.300 1028.800 1448 1041 1448C1053.200 1448 1065.400 1467.800 1077.550 1482C1089.700 1496.200 1101.900 1533 1114.100 1533C1126.300 1533 1138.500 1449 1150.650 1449C1162.800 1449 1175 1459.100 1187.200 1468.700C1199.400 1478.300 1211.600 1492.500 1223.750 1506.700"/>
<g fill="#fff" stroke="#42a5f5" stroke-width="1.500">
<circle cx="821.700" cy="1454" r="3"/><circle cx="858.250" cy="1533" r="3"/><circle cx="894.800" cy="1528.300" r="3"/><circle cx="931.350" cy="1448" r="3"/><circle cx="967.900" cy="1512.300" r="3"/><circle cx="1004.450" cy="1499.700" r="3"/><circle cx="1041" cy="1448" r="3"/><circle cx="1077.550" cy="1482" r="3"/><circle cx="1114.100" cy="1533" r="3"/><circle cx="1150.650" cy="1449" r="3"/><circle cx="1187.200" cy="1468.700" r="3"/><circle cx="1223.750" cy="1506.700" r="3"/>
</g>

<!-- activities -->
<rect x="273.500" y="1753.500" width="321.500" height="442.500" rx="6" class="c"/>
<text x="289" y="1783" class="g" textLength="58.500" lengthAdjust="spacingAndGlyphs">Activities</text>
<text x="289" y="1802" class="b" textLength="41" lengthAdjust="spacingAndGlyphs">Today</text>
<use href="#kb" x="563.300" y="1788"/>
<rect x="299" y="1843" width="4" height="337" fill="#eeeeee"/>
<circle cx="301" cy="1843" r="12" fill="#2196f3"/><circle cx="301" cy="1916" r="12" fill="#2196f3"/><circle cx="301" cy="2008" r="12" fill="#2196f3"/><circle cx="301" cy="2100" r="12" fill="#2196f3"/>
<text x="298" y="1848" class="w" style="font-size:13px">1</text>
<text x="297.300" y="1921" class="w" style="font-size:13px">2</text>
<text x="297.300" y="2013" class="w" style="font-size:13px">3</text>
<text x="297.300" y="2105" class="w" style="font-size:13px">4</text>
<text x="329.300" y="1845" class="b" textLength="202.700" lengthAdjust="spacingAndGlyphs">Nihil quam architecto eum nisi.</text>
<text x="329.300" y="1864.200" class="n" textLength="150.700" lengthAdjust="spacingAndGlyphs">Culpa fuga dolor in hic.</text>
<text x="329.300" y="1883.200" class="n" textLength="124.400" lengthAdjust="spacingAndGlyphs">a few seconds ago</text>
<text x="329.300" y="1918" class="b" textLength="224.700" lengthAdjust="spacingAndGlyphs">Facilis voluptatem aspernatur iure</text>
<text x="329.300" y="1937" class="b" textLength="21" lengthAdjust="spacingAndGlyphs">vel.</text>
<text x="329.300" y="1956.200" class="n" textLength="138.700" lengthAdjust="spacingAndGlyphs">Eos qui aut velit nulla.</text>
<text x="329.300" y="1975.200" class="n" textLength="66.700" lengthAdjust="spacingAndGlyphs">a day ago</text>
<text x="329.300" y="2010" class="b" textLength="215.700" lengthAdjust="spacingAndGlyphs">Qui commodi non in voluptatem.</text>
<text x="329.300" y="2029.200" class="n" textLength="168.700" lengthAdjust="spacingAndGlyphs">Accusantium eveniet nihil</text>
<text x="329.300" y="2048.200" class="n" textLength="113" lengthAdjust="spacingAndGlyphs">perspiciatis iusto.</text>
<text x="329.300" y="2067.200" class="n" textLength="72" lengthAdjust="spacingAndGlyphs">2 days ago</text>
<text x="329.300" y="2102" class="b" textLength="232.400" lengthAdjust="spacingAndGlyphs">Deserunt rem exercitationem quasi</text>
<text x="329.300" y="2121" class="b" textLength="59.400" lengthAdjust="spacingAndGlyphs">voluptas.</text>
<text x="329.300" y="2140.200" class="n" textLength="188" lengthAdjust="spacingAndGlyphs">Asperiores est omnis fugit et.</text>
<text x="329.300" y="2159.200" class="n" textLength="72" lengthAdjust="spacingAndGlyphs">3 days ago</text>

<!-- todo -->
<rect x="605" y="1753.500" width="645" height="444.500" rx="6" class="c"/>
<text x="621" y="1783" class="g" textLength="35.600" lengthAdjust="spacingAndGlyphs">To do</text>
<text x="621" y="1802" class="b" textLength="73" lengthAdjust="spacingAndGlyphs">In progress</text>
<use href="#kb" x="1218.300" y="1788"/>
<rect x="629.500" y="1850" width="15" height="15" rx="4" class="k"/>
<rect x="629.500" y="1903" width="15" height="15" rx="4" class="k"/>
<rect x="629.500" y="1956" width="15" height="15" rx="4" class="k"/>
<rect x="629.500" y="2009" width="15" height="15" rx="4" class="k"/>
<rect x="629.500" y="2062" width="15" height="15" rx="4" class="k"/>
<use href="#o" x="669" y="1839" width="32" height="32"/>
<use href="#l" x="669" y="1892" width="32" height="32"/>
<use href="#j" x="669" y="1945" width="32" height="32"/>
<use href="#j" x="669" y="1998" width="32" height="32"/>
<use href="#b" x="669" y="2051" width="32" height="32"/>
<text x="709" y="1853" class="b" textLength="271" lengthAdjust="spacingAndGlyphs">Sunt aperiam consectetur et laudantium.</text>
<text x="709" y="1871" class="u" textLength="65" lengthAdjust="spacingAndGlyphs">In Progress</text>
<text x="709" y="1906" class="b" textLength="285.900" lengthAdjust="spacingAndGlyphs">Mollitia excepturi aut voluptate voluptatum.</text>
<text x="709" y="1924" class="u" textLength="77" lengthAdjust="spacingAndGlyphs">Code Review</text>
<text x="709" y="1959" class="b" textLength="207" lengthAdjust="spacingAndGlyphs">Illo minima fuga magnam fugit.</text>
<text x="709" y="1977" class="u" textLength="65" lengthAdjust="spacingAndGlyphs">In Progress</text>
<text x="709" y="2012" class="b" textLength="291" lengthAdjust="spacingAndGlyphs">Voluptatem voluptatem ut eveniet expedita.</text>
<text x="709" y="2030" class="u" textLength="65" lengthAdjust="spacingAndGlyphs">In Progress</text>
<text x="709" y="2065" class="b" textLength="194" lengthAdjust="spacingAndGlyphs">Magni voluptatibus quia ut ut.</text>
<text x="709" y="2083" class="u" textLength="65" lengthAdjust="spacingAndGlyphs">In Progress</text>
<text x="1080.900" y="1862.500" class="n" textLength="38.100" lengthAdjust="spacingAndGlyphs">Jun 16</text>
<text x="1083" y="1915.500" class="n" textLength="38" lengthAdjust="spacingAndGlyphs">Jun 15</text>
<text x="1083" y="1968.500" class="n" textLength="38" lengthAdjust="spacingAndGlyphs">Jun 14</text>
<text x="1083.800" y="2021.500" class="n" textLength="37.900" lengthAdjust="spacingAndGlyphs">Jun 13</text>
<text x="1065.500" y="2074.500" class="n" textLength="37.900" lengthAdjust="spacingAndGlyphs">Jun 12</text>
<rect x="1127.200" y="1850" width="43" height="16" rx="8" fill="#c2185b"/>
<rect x="1129.400" y="1903" width="40.800" height="16" rx="8" fill="#303f9f"/>
<rect x="1129.400" y="1956" width="40.800" height="16" rx="8" fill="#d32f2f"/>
<rect x="1130.200" y="2009" width="40" height="16" rx="8" fill="#fbc02d"/>
<rect x="1111" y="2062" width="59.200" height="16" rx="8" fill="#d32f2f"/>
<text x="1135.300" y="1862" class="w" textLength="26.700" lengthAdjust="spacingAndGlyphs">HIGH</text>
<text x="1137.400" y="1915" class="w" textLength="24.600" lengthAdjust="spacingAndGlyphs">LOW</text>
<text x="1137.400" y="1968" class="w" textLength="24.600" lengthAdjust="spacingAndGlyphs">LOW</text>
<text x="1138" y="2021" class="w" textLength="24" lengthAdjust="spacingAndGlyphs">NEW</text>
<text x="1119" y="2074" class="w" textLength="43" lengthAdjust="spacingAndGlyphs">MEDIUM</text>
<use href="#xx" x="1202" y="1858"/><use href="#xx" x="1202" y="1911"/><use href="#xx" x="1202" y="1964"/><use href="#xx" x="1202" y="2017"/><use href="#xx" x="1202" y="2070"/>
<rect x="621.500" y="2096.500" width="612.500" height="35" rx="4" fill="#fff" stroke="#e4e7ef" stroke-width="1.200"/>
<text x="634" y="2118" style="fill:#b5b5b5" textLength="58.300" lengthAdjust="spacingAndGlyphs">Add new...</text>
<text x="621" y="2170" class="b" textLength="69.600" lengthAdjust="spacingAndGlyphs">5 tasks left</text>
<text x="1183.400" y="2169" style="font-size:13px;font-weight:bold;fill:#2196f3" textLength="35.300" lengthAdjust="spacingAndGlyphs">CLEAR</text>
</svg>
</body></html>
